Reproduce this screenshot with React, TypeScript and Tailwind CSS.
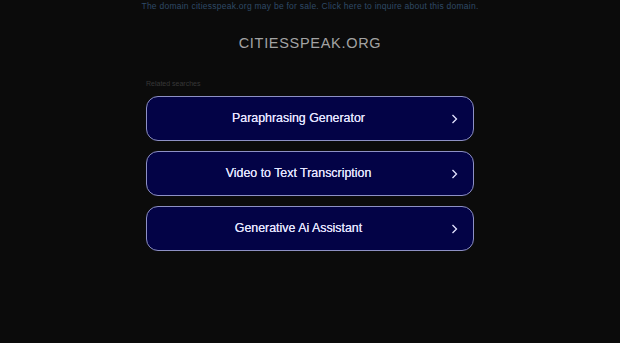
const items = ['Paraphrasing Generator', 'Video to Text Transcription', 'Generative Ai Assistant'];

export default function App() {
  return (
    <div className="min-h-[343px] bg-[#0b0b0b] font-['Liberation_Sans',Arial,sans-serif] flex flex-col items-center">
      <p className="mt-[1px] text-[8.5px] leading-[10px] tracking-[0.25px] text-[#2f4a66]">
        The domain citiesspeak.org may be for sale. Click here to inquire about this domain.
      </p>
      <h1 className="mt-[24px] text-[14.5px] leading-[16px] tracking-[0.7px] text-[#a3a3a3]">CITIESSPEAK.ORG</h1>
      <div className="mt-[28px] w-[328px]">
        <p className="text-[7px] leading-[9px] text-[#383838]">Related searches</p>
        <div className="mt-[8px] flex flex-col gap-[10px]">
          {items.map(t => (
            <div
              key={t}
              className="relative h-[45px] rounded-[12px] border border-[#8d90c4] bg-[#030346] flex items-center justify-center pr-[23px]"
            >
              <span className="text-[12.4px] text-[#e4e4ff] [text-shadow:0_0_0.5px_#e4e4ff]">{t}</span>
              <svg
                className="absolute right-[15px] top-1/2 -translate-y-1/2"
                width="7"
                height="11"
                viewBox="0 0 7 11"
                fill="none"
              >
                <path d="M1.5 1.5L5.5 5.5L1.5 9.5" stroke="#e4e4ff" strokeWidth="1.3" />
              </svg>
            </div>
          ))}
        </div>
      </div>
    </div>
  );
}
